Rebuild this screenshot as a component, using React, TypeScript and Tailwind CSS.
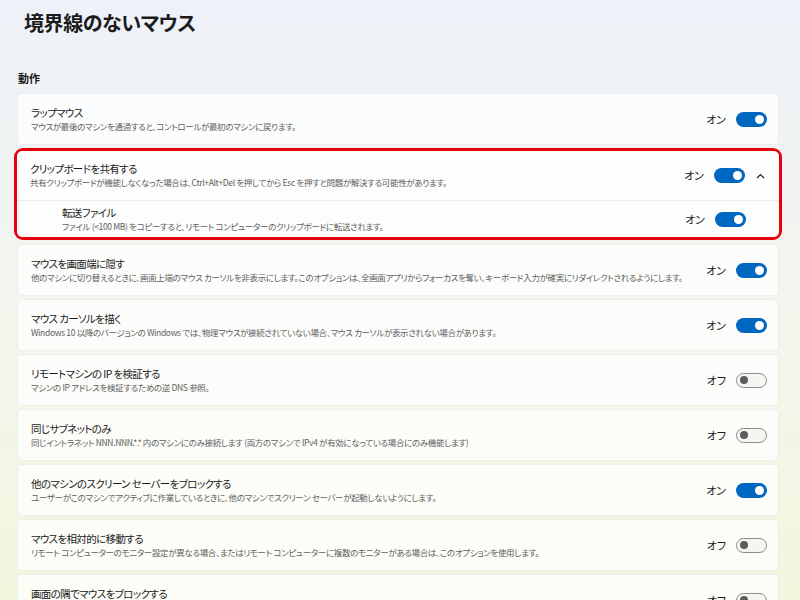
import React from "react";

type Item = {
  title: string;
  desc: string;
  on: boolean;
};

const ITEMS: Item[] = [
  {
    title: "マウスを画面端に隠す",
    desc: "他のマシンに切り替えるときに、画面上端のマウス カーソルを非表示にします。このオプションは、全画面アプリからフォーカスを奪い、キーボード入力が確実にリダイレクトされるようにします。",
    on: true,
  },
  {
    title: "マウス カーソルを描く",
    desc: "Windows 10 以降のバージョンの Windows では、物理マウスが接続されていない場合、マウス カーソルが表示されない場合があります。",
    on: true,
  },
  {
    title: "リモートマシンの IP を検証する",
    desc: "マシンの IP アドレスを検証するための逆 DNS 参照。",
    on: false,
  },
  {
    title: "同じサブネットのみ",
    desc: "同じイントラネット NNN.NNN.*.* 内のマシンにのみ接続します (両方のマシンで IPv4 が有効になっている場合にのみ機能します)",
    on: false,
  },
  {
    title: "他のマシンのスクリーン セーバーをブロックする",
    desc: "ユーザーがこのマシンでアクティブに作業しているときに、他のマシンでスクリーン セーバーが起動しないようにします。",
    on: true,
  },
  {
    title: "マウスを相対的に移動する",
    desc: "リモート コンピューターのモニター設定が異なる場合、またはリモート コンピューターに複数のモニターがある場合は、このオプションを使用します。",
    on: false,
  },
  {
    title: "画面の隅でマウスをブロックする",
    desc: "画面の隅にマウスを移動したときに、誤ってマシンが切り替わらないようにします。",
    on: false,
  },
];

function Toggle({ on }: { on: boolean }) {
  return (
    <div className="flex shrink-0 items-center gap-[10px]">
      <span className="whitespace-nowrap text-[11px] leading-none text-[#1b1b1b]">
        {on ? "オン" : "オフ"}
      </span>
      {on ? (
        <div className="flex h-[15px] w-[31px] items-center justify-end rounded-full bg-[#0067c0] pr-[3px]">
          <div className="h-[9px] w-[9px] rounded-full bg-white" />
        </div>
      ) : (
        <div className="flex h-[15px] w-[31px] items-center rounded-full border border-[#8a8a8a] bg-[#f5f5f2] pl-[3px]">
          <div className="h-[8px] w-[8px] rounded-full bg-[#5c5c5c]" />
        </div>
      )}
    </div>
  );
}

function Text({ title, desc }: { title: string; desc: string }) {
  return (
    <div className="flex min-w-0 flex-col">
      <div className="whitespace-nowrap text-[10.5px] leading-[14px] tracking-[-0.06em] text-[#1b1b1b]">
        {title}
      </div>
      <div className="whitespace-nowrap text-[8.5px] leading-[13px] tracking-[-0.04em] text-[#606060]">
        {desc}
      </div>
    </div>
  );
}

function Card({ item }: { item: Item }) {
  return (
    <div className="flex h-[52px] shrink-0 items-center justify-between gap-4 rounded-[5px] border border-black/[0.06] bg-white/75 pl-[13px] pr-[11px]">
      <Text title={item.title} desc={item.desc} />
      <Toggle on={item.on} />
    </div>
  );
}

export default function App() {
  return (
    <div className="h-[600px] w-[800px] overflow-hidden bg-gradient-to-b from-[#eef1f8] via-[#f3f5ee] to-[#f2f7de] font-['Noto_Sans_CJK_JP','Liberation_Sans',sans-serif] [font-feature-settings:'palt']">
      <div className="pl-6 pt-[9px] text-[20px] font-semibold leading-[28px] tracking-[-0.02em] text-[#1b1b1b]">
        境界線のないマウス
      </div>
      <div className="pl-[17px] pr-[21px]">
        <div className="mt-[33px] mb-[7px] pl-px text-[11px] font-semibold leading-[16px] text-[#1b1b1b]">
          動作
        </div>
        <div className="flex flex-col gap-[3px]">
          <Card
            item={{
              title: "ラップマウス",
              desc: "マウスが最後のマシンを通過すると、コントロールが最初のマシンに戻ります。",
              on: true,
            }}
          />
          <div className="-mx-[3px] mb-px rounded-[9px] border-[3px] border-[#e8000c]">
            <div className="rounded-[5px] bg-white/80">
              <div className="flex h-[49px] items-center justify-between gap-4 pl-[13px] pr-[14px]">
                <Text
                  title="クリップボードを共有する"
                  desc="共有クリップボードが機能しなくなった場合は、Ctrl+Alt+Del を押してから Esc を押すと問題が解決する可能性があります。"
                />
                <div className="flex shrink-0 items-center gap-[11px]">
                  <Toggle on />
                  <svg width="9" height="6" viewBox="0 0 9 6" fill="none">
                    <polyline points="1,5 4.5,1.5 8,5" stroke="#1b1b1b" strokeWidth="1.1" />
                  </svg>
                </div>
              </div>
              <div className="h-px bg-black/[0.07]" />
              <div className="flex h-[36px] items-center justify-between gap-4 pl-[45px] pr-[33px]">
                <Text
                  title="転送ファイル"
                  desc="ファイル (<100 MB) をコピーすると、リモート コンピューターのクリップボードに転送されます。"
                />
                <Toggle on />
              </div>
            </div>
          </div>
          {ITEMS.map((it) => (
            <Card key={it.title} item={it} />
          ))}
        </div>
      </div>
    </div>
  );
}
